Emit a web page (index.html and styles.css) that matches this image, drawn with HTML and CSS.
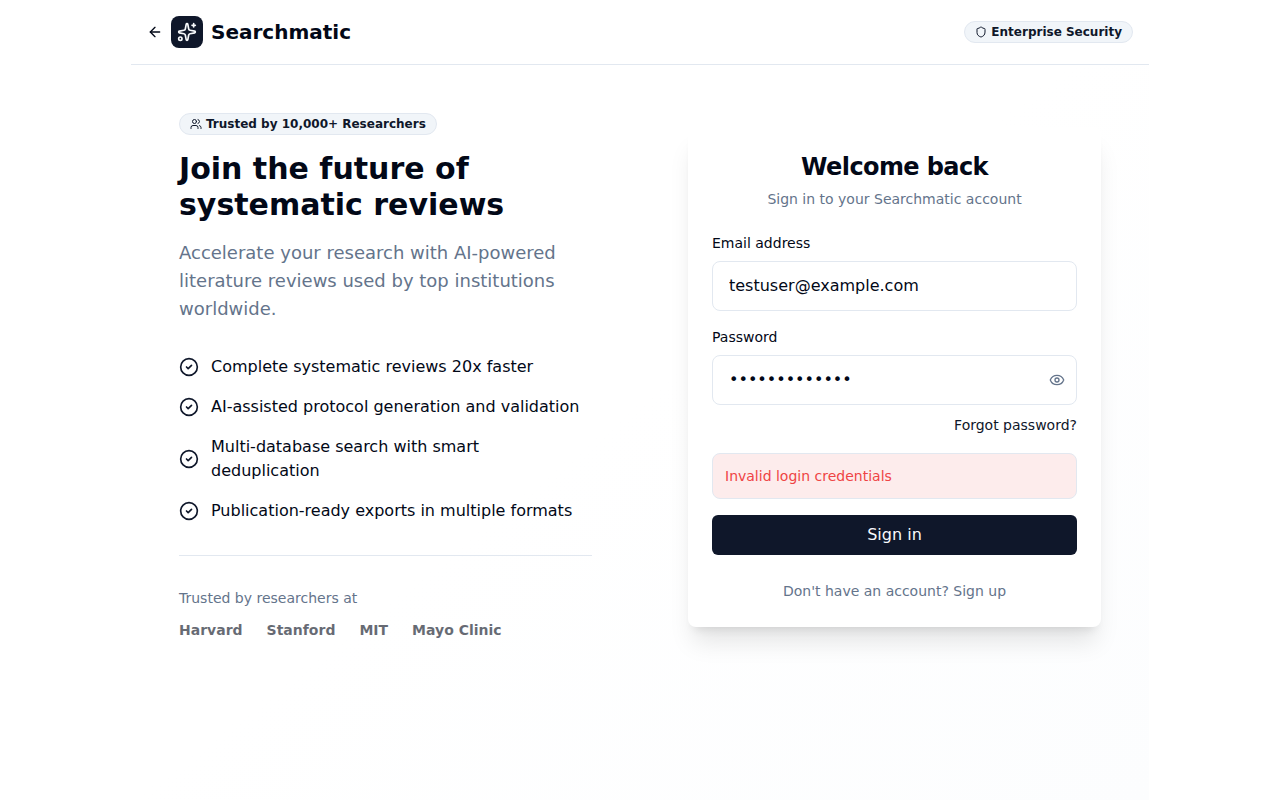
FILE: index.html
```html
<!DOCTYPE html>
<html lang="en">
<head>
<meta charset="utf-8">
<title>Searchmatic</title>
<link rel="stylesheet" href="styles.css">
</head>
<body>
<div class="page">
  <header class="header">
    <div class="brand">
      <svg class="icon back" viewBox="0 0 24 24"><path d="m12 19-7-7 7-7"/><path d="M19 12H5"/></svg>
      <span class="logo"><svg class="icon" viewBox="0 0 24 24"><path d="M11.017 2.814a1 1 0 0 1 1.966 0l1.051 5.558a2 2 0 0 0 1.594 1.594l5.558 1.051a1 1 0 0 1 0 1.966l-5.558 1.051a2 2 0 0 0-1.594 1.594l-1.051 5.558a1 1 0 0 1-1.966 0l-1.051-5.558a2 2 0 0 0-1.594-1.594l-5.558-1.051a1 1 0 0 1 0-1.966l5.558-1.051a2 2 0 0 0 1.594-1.594z"/><path d="M20 2v4"/><path d="M22 4h-4"/><circle cx="4" cy="20" r="2"/></svg></span>
      <span class="name">Searchmatic</span>
    </div>
    <span class="badge"><svg class="icon" viewBox="0 0 24 24"><path d="M20 13c0 5-3.500 7.500-7.660 8.950a1 1 0 0 1-.67-.01C7.500 20.500 4 18 4 13V6a1 1 0 0 1 1-1c2 0 4.500-1.200 6.240-2.720a1.170 1.170 0 0 1 1.520 0C14.510 3.810 17 5 19 5a1 1 0 0 1 1 1z"/></svg>Enterprise Security</span>
  </header>
  <main class="main">
    <section class="intro">
      <span class="badge"><svg class="icon" viewBox="0 0 24 24"><path d="M16 21v-2a4 4 0 0 0-4-4H6a4 4 0 0 0-4 4v2"/><path d="M16 3.128a4 4 0 0 1 0 7.744"/><path d="M22 21v-2a4 4 0 0 0-3-3.870"/><circle cx="9" cy="7" r="4"/></svg>Trusted by 10,000+ Researchers</span>
      <h1 class="headline">Join the future of systematic reviews</h1>
      <p class="lead">Accelerate your research with AI-powered literature reviews used by top institutions worldwide.</p>
      <ul class="features">
        <li><svg class="icon" viewBox="0 0 24 24"><circle cx="12" cy="12" r="10"/><path d="m9 12 2 2 4-4"/></svg><span>Complete systematic reviews 20x faster</span></li>
        <li><svg class="icon" viewBox="0 0 24 24"><circle cx="12" cy="12" r="10"/><path d="m9 12 2 2 4-4"/></svg><span>AI-assisted protocol generation and validation</span></li>
        <li><svg class="icon" viewBox="0 0 24 24"><circle cx="12" cy="12" r="10"/><path d="m9 12 2 2 4-4"/></svg><span>Multi-database search with smart deduplication</span></li>
        <li><svg class="icon" viewBox="0 0 24 24"><circle cx="12" cy="12" r="10"/><path d="m9 12 2 2 4-4"/></svg><span>Publication-ready exports in multiple formats</span></li>
      </ul>
      <div class="trusted">
        <p>Trusted by researchers at</p>
        <div class="institutions"><span>Harvard</span><span>Stanford</span><span>MIT</span><span>Mayo Clinic</span></div>
      </div>
    </section>
    <section class="card">
      <h2 class="title">Welcome back</h2>
      <p class="subtitle">Sign in to your Searchmatic account</p>
      <form class="form">
        <label for="email">Email address</label>
        <input class="field" id="email" type="email" value="testuser@example.com">
        <label for="password">Password</label>
        <div class="password">
          <input class="field" id="password" type="password" value="wrongpassword">
          <svg class="icon eye" viewBox="0 0 24 24"><path d="M2.062 12.348a1 1 0 0 1 0-.696 10.750 10.750 0 0 1 19.876 0 1 1 0 0 1 0 .696 10.750 10.750 0 0 1-19.876 0"/><circle cx="12" cy="12" r="3"/></svg>
        </div>
        <a class="forgot">Forgot password?</a>
        <div class="alert">Invalid login credentials</div>
        <button class="submit" type="button">Sign in</button>
        <p class="signup">Don't have an account? Sign up</p>
      </form>
    </section>
  </main>
</div>
</body>
</html>
```
FILE: styles.css
```css
* { box-sizing: border-box; margin: 0; padding: 0; }
body {
  background: #fff;
  color: #020817;
  font: 16px/24px "DejaVu Sans", sans-serif;
}
.page {
  width: 1018px;
  min-height: 100vh;
  margin: 0 auto;
  background: linear-gradient(to bottom right, #fff, #fff 50%, #fcfdfe);
}
.icon {
  display: block;
  flex: none;
  width: 20px;
  height: 20px;
  fill: none;
  stroke: currentColor;
  stroke-width: 2;
  stroke-linecap: round;
  stroke-linejoin: round;
}
.header {
  display: flex;
  align-items: center;
  justify-content: space-between;
  height: 65px;
  padding: 0 16px;
  border-bottom: 1px solid #e2e8f0;
  background: #fff;
}
.brand { display: flex; align-items: center; gap: 8px; }
.back { width: 16px; height: 16px; }
.logo {
  display: grid;
  place-items: center;
  width: 32px;
  height: 32px;
  border-radius: 8px;
  background: #0f172a;
  color: #f8fafc;
}
.name { font-size: 20px; line-height: 28px; font-weight: 700; }
.badge {
  display: inline-flex;
  align-items: center;
  gap: 4px;
  height: 22px;
  padding: 0 10px;
  border: 1px solid #e2e8f0;
  border-radius: 11px;
  background: #f1f5f9;
  color: #0f172a;
  font-size: 12px;
  line-height: 16px;
  font-weight: 700;
  white-space: nowrap;
}
.badge .icon { width: 12px; height: 12px; }
.main {
  display: grid;
  grid-template-columns: 1fr 1fr;
  gap: 96px;
  align-items: center;
  padding: 48px;
}
.intro { display: flex; flex-direction: column; align-items: flex-start; }
.headline { margin-top: 16px; font-size: 30px; line-height: 36px; font-weight: 700; }
.lead { margin-top: 16px; font-size: 18px; line-height: 28px; color: #64748b; }
.features {
  display: flex;
  flex-direction: column;
  gap: 16px;
  margin-top: 32px;
  list-style: none;
}
.features li { display: flex; align-items: center; gap: 12px; }
.features .icon { color: #0f172a; }
.trusted {
  width: 100%;
  margin-top: 32px;
  padding-top: 32px;
  border-top: 1px solid #e2e8f0;
  font-size: 14px;
  line-height: 20px;
  color: #64748b;
}
.institutions {
  display: flex;
  gap: 24px;
  margin-top: 12px;
  color: #020817;
  font-weight: 700;
  opacity: 0.6;
}
.card {
  padding: 24px;
  border-radius: 8px;
  background: #fff;
  box-shadow: 0 20px 25px -5px rgba(0, 0, 0, 0.1), 0 8px 10px -6px rgba(0, 0, 0, 0.1);
}
.title {
  font-size: 24px;
  line-height: 32px;
  font-weight: 700;
  letter-spacing: -0.6px;
  text-align: center;
}
.subtitle { margin-top: 6px; font-size: 14px; line-height: 20px; text-align: center; color: #64748b; }
.form { display: flex; flex-direction: column; margin-top: 24px; font-size: 14px; line-height: 20px; }
.field {
  display: block;
  width: 100%;
  height: 50px;
  margin: 8px 0 16px;
  padding: 12px 16px;
  border: 1px solid #e2e8f0;
  border-radius: 8px;
  outline: none;
  background: #fff;
  color: #020817;
  font: 16px/24px "DejaVu Sans", sans-serif;
}
.password { position: relative; margin: 8px 0 10px; }
.password .field { margin: 0; padding-right: 48px; }
.eye { position: absolute; top: 17px; right: 12px; width: 16px; height: 16px; color: #64748b; }
.forgot { align-self: flex-end; color: #0f172a; }
.alert {
  margin-top: 18px;
  padding: 12px;
  border: 1px solid #e2e8f0;
  border-radius: 8px;
  background: #fdecec;
  color: #ef4444;
}
.submit {
  height: 40px;
  margin-top: 16px;
  border: 0;
  border-radius: 6px;
  background: #0f172a;
  color: #f8fafc;
  font: 16px/24px "DejaVu Sans", sans-serif;
}
.signup { margin: 26px 0 2px; text-align: center; color: #64748b; }
```
